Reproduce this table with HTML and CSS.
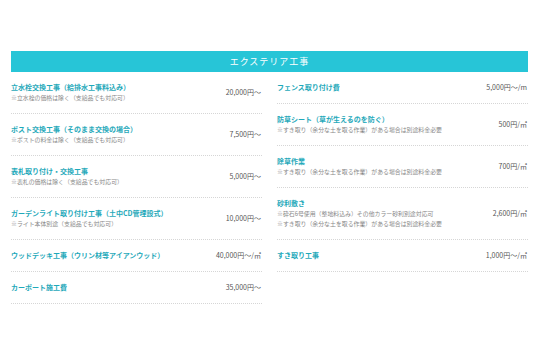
FILE: index.html
```html
<!DOCTYPE html>
<html lang="ja">
<head>
<meta charset="utf-8">
<link rel="stylesheet" href="styles.css">
</head>
<body>
<div class="page">
  <h2 class="banner">エクステリア工事</h2>
  <div class="cols">
    <ul class="list">
      <li class="row"><div class="info"><div class="title">立水栓交換工事（給排水工事料込み）</div><div class="note">※立水栓の価格は除く（支給品でも対応可）</div></div><div class="price">20,000円〜</div></li>
      <li class="row"><div class="info"><div class="title">ポスト交換工事（そのまま交換の場合）</div><div class="note">※ポストの料金は除く（支給品でも対応可）</div></div><div class="price">7,500円〜</div></li>
      <li class="row"><div class="info"><div class="title">表札取り付け・交換工事</div><div class="note">※表札の価格は除く（支給品でも対応可）</div></div><div class="price">5,000円〜</div></li>
      <li class="row"><div class="info"><div class="title">ガーデンライト取り付け工事（土中CD管埋設式）</div><div class="note">※ライト本体別途（支給品でも対応可）</div></div><div class="price">10,000円〜</div></li>
      <li class="row"><div class="info"><div class="title">ウッドデッキ工事（ウリン材等アイアンウッド）</div></div><div class="price">40,000円〜/㎡</div></li>
      <li class="row"><div class="info"><div class="title">カーポート施工費</div></div><div class="price">35,000円〜</div></li>
    </ul>
    <ul class="list">
      <li class="row"><div class="info"><div class="title">フェンス取り付け費</div></div><div class="price">5,000円〜/m</div></li>
      <li class="row"><div class="info"><div class="title">防草シート（草が生えるのを防ぐ）</div><div class="note">※すき取り（余分な土を取る作業）がある場合は別途料金必要</div></div><div class="price">500円/㎡</div></li>
      <li class="row"><div class="info"><div class="title">除草作業</div><div class="note">※すき取り（余分な土を取る作業）がある場合は別途料金必要</div></div><div class="price">700円/㎡</div></li>
      <li class="row"><div class="info"><div class="title">砂利敷き</div><div class="note">※砕石6号使用（整地料込み）その他カラー砂利別途対応可</div><div class="note">※すき取り（余分な土を取る作業）がある場合は別途料金必要</div></div><div class="price">2,600円/㎡</div></li>
      <li class="row"><div class="info"><div class="title">すき取り工事</div></div><div class="price">1,000円〜/㎡</div></li>
    </ul>
  </div>
</div>
</body>
</html>
```

FILE: styles.css
```css
* { box-sizing: border-box; }
html, body { margin: 0; padding: 0; background: #fff; }
body { font-family: "Noto Sans CJK JP", "Noto Sans", sans-serif; color: #555; }
.page { width: 517px; margin: 51px 0 0 11px; }
.banner {
  margin: 0;
  height: 21px;
  background: #27c5d7;
  color: #fff;
  font-family: "Noto Sans CJK JP", serif;
  font-weight: 400;
  font-size: 9px;
  letter-spacing: 1px;
  line-height: 21px;
  text-align: center;
}
.cols { display: grid; grid-template-columns: 251px 251px; column-gap: 15px; }
.list { list-style: none; margin: 0; padding: 0; }
.row {
  display: flex;
  align-items: center;
  justify-content: space-between;
  padding: 10px 1px 10px 0;
  border-bottom: 1px dotted #d6d6d6;
}
.title { color: #1fa9ba; font-size: 7px; font-weight: 700; line-height: 11px; }
.note { color: #888; font-size: 5.9px; line-height: 10px; }
.price { font-size: 7px; line-height: 11px; color: #555; white-space: nowrap; }
```
